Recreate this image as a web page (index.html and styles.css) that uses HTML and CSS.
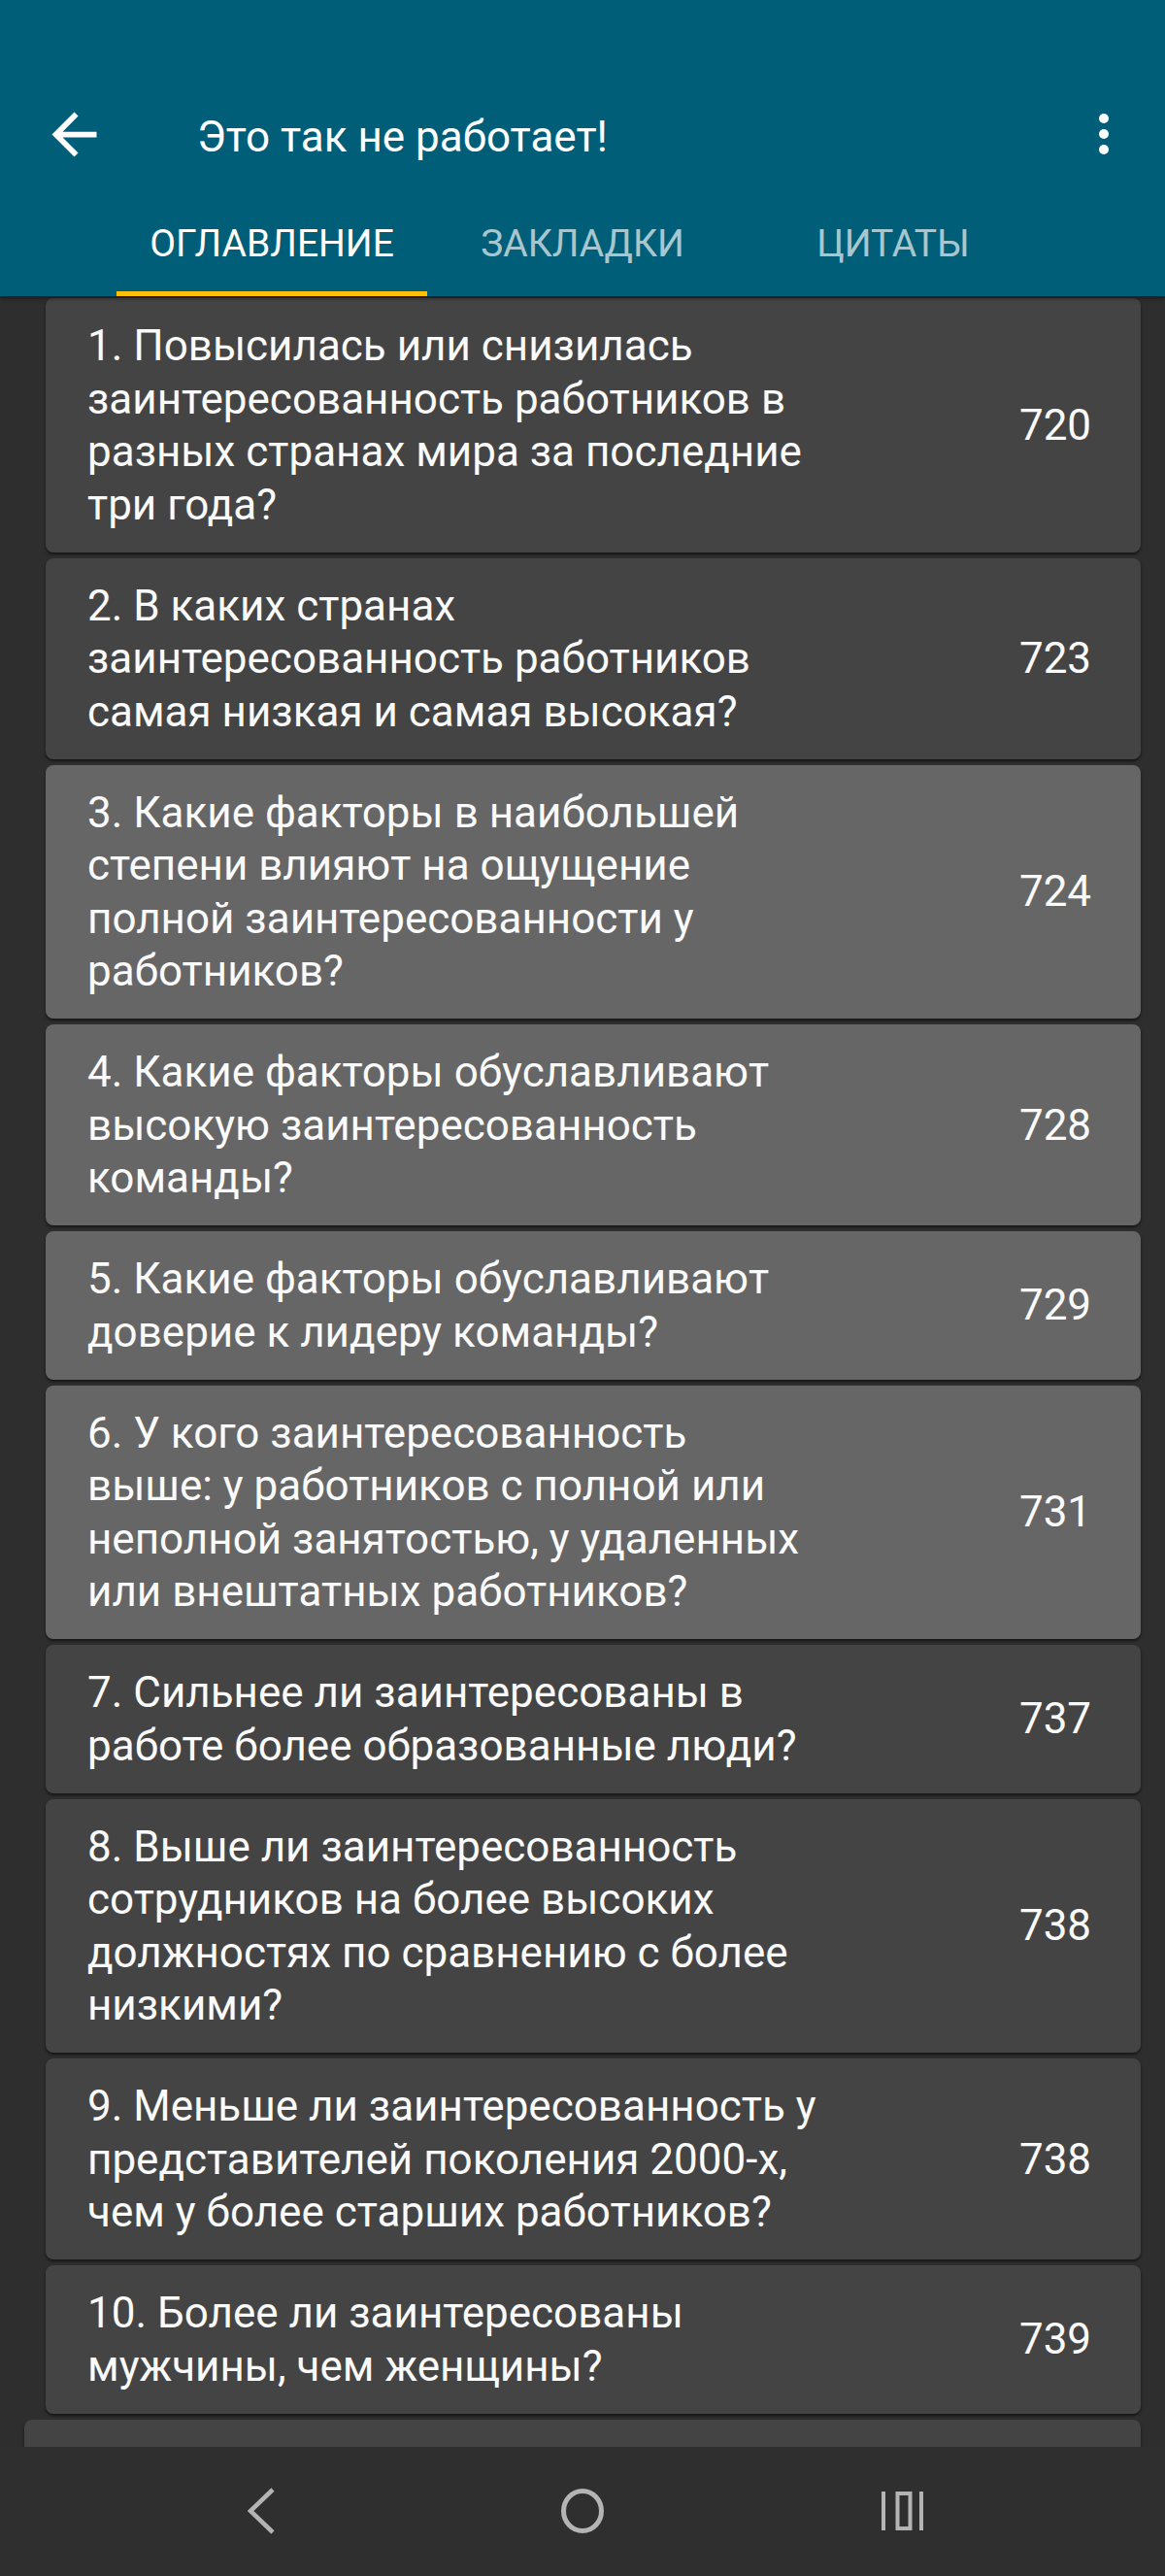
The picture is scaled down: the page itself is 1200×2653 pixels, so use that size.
FILE: index.html
```html
<!DOCTYPE html>
<html lang="ru">

<head>
    <meta charset="UTF-8">
    <meta name="viewport" content="width=device-width, initial-scale=1.0">
    <title>Это так не работает!</title>
    <link rel="stylesheet" href="styles.css">
</head>

<body>
    <div class="screen">
        <header class="app-header">
            <div class="status-bar"></div>
            <div class="toolbar">
                <svg class="back-icon" viewBox="0 0 24 24"><path d="M20 11H7.83l5.59-5.59L12 4l-8 8 8 8 1.41-1.41L7.83 13H20v-2z" fill="#fff"/></svg>
                <div class="toolbar-title">Это так не работает!</div>
                <svg class="menu-icon" viewBox="0 0 24 24"><circle cx="12" cy="5.6" r="2" fill="#fff"/><circle cx="12" cy="12" r="2" fill="#fff"/><circle cx="12" cy="18.4" r="2" fill="#fff"/></svg>
            </div>
            <nav class="tabs">
                <div class="tab active">ОГЛАВЛЕНИЕ</div>
                <div class="tab">ЗАКЛАДКИ</div>
                <div class="tab">ЦИТАТЫ</div>
            </nav>
        </header>

        <main class="toc-list">
            <div class="toc-item">
                <div class="toc-title">1. Повысилась или снизилась заинтересованность работников в разных странах мира за последние три года?</div>
                <div class="toc-page">720</div>
            </div>
            <div class="toc-item">
                <div class="toc-title">2. В каких странах заинтересованность работников самая низкая и самая высокая?</div>
                <div class="toc-page">723</div>
            </div>
            <div class="toc-item read">
                <div class="toc-title">3. Какие факторы в наибольшей степени влияют на ощущение полной заинтересованности у работников?</div>
                <div class="toc-page">724</div>
            </div>
            <div class="toc-item read">
                <div class="toc-title">4. Какие факторы обуславливают высокую заинтересованность команды?</div>
                <div class="toc-page">728</div>
            </div>
            <div class="toc-item read">
                <div class="toc-title">5. Какие факторы обуславливают доверие к лидеру команды?</div>
                <div class="toc-page">729</div>
            </div>
            <div class="toc-item read">
                <div class="toc-title">6. У кого заинтересованность выше: у работников с полной или неполной занятостью, у удаленных или внештатных работников?</div>
                <div class="toc-page">731</div>
            </div>
            <div class="toc-item">
                <div class="toc-title">7. Сильнее ли заинтересованы в работе более образованные люди?</div>
                <div class="toc-page">737</div>
            </div>
            <div class="toc-item">
                <div class="toc-title">8. Выше ли заинтересованность сотрудников на более высоких должностях по сравнению с более низкими?</div>
                <div class="toc-page">738</div>
            </div>
            <div class="toc-item">
                <div class="toc-title">9. Меньше ли заинтересованность у представителей поколения 2000-х, чем у более старших работников?</div>
                <div class="toc-page">738</div>
            </div>
            <div class="toc-item">
                <div class="toc-title">10. Более ли заинтересованы мужчины, чем женщины?</div>
                <div class="toc-page">739</div>
            </div>
            <div class="toc-item wide"></div>
        </main>

        <footer class="nav-bar">
            <svg class="nav-icon" viewBox="0 0 46 50"><polyline points="34,3 11,25 34,47" fill="none" stroke="#b4b4b4" stroke-width="4.5"/></svg>
            <svg class="nav-icon" viewBox="0 0 46 50"><ellipse cx="23" cy="25" rx="19.5" ry="20.5" fill="none" stroke="#b4b4b4" stroke-width="5"/></svg>
            <svg class="nav-icon" viewBox="0 0 46 50"><rect x="1" y="5" width="4" height="40" fill="#b4b4b4"/><rect x="17.5" y="7" width="13" height="36" fill="none" stroke="#b4b4b4" stroke-width="4"/><rect x="40" y="5" width="4" height="40" fill="#b4b4b4"/></svg>
        </footer>
    </div>
</body>

</html>
```

FILE: styles.css
```css
body {
    margin: 0;
    font-family: 'Roboto', 'Noto Sans', sans-serif;
    background: #2e2e2e;
    overflow: hidden;
}

.screen {
    display: flex;
    flex-direction: column;
    height: 2653px;
}

.app-header {
    background: #005e78;
    flex-shrink: 0;
    position: relative;
    z-index: 2;
    box-shadow: 0 2px 4px rgba(0, 0, 0, 0.5);
}

.status-bar {
    height: 86px;
}

.toolbar {
    height: 112px;
    display: flex;
    align-items: center;
    padding: 0 33px 0 42px;
}

.back-icon {
    width: 69px;
    height: 69px;
    margin-top: -7px;
}

.toolbar-title {
    flex: 1;
    margin-left: 92px;
    color: #fff;
    font-size: 44px;
    margin-top: -2px;
}

.menu-icon {
    width: 60px;
    height: 60px;
    margin-top: -8px;
}

.tabs {
    display: flex;
    justify-content: center;
    height: 107px;
}

.tab {
    width: 320px;
    display: flex;
    align-items: center;
    justify-content: center;
    font-size: 39px;
    color: rgba(255, 255, 255, 0.68);
    box-sizing: border-box;
    padding-top: 4px;
    border-bottom: 5px solid transparent;
}

.tab.active {
    color: #fff;
    border-bottom-color: #ffc107;
}

.toc-list {
    flex: 1;
    overflow: hidden;
    padding: 2px 25px 0 47px;
}

.toc-item {
    display: flex;
    align-items: center;
    background: #444444;
    border-radius: 8px;
    box-shadow: 0 2px 3px rgba(0, 0, 0, 0.55);
    padding: 22px 43px 21.5px 43px;
    margin-bottom: 6px;
    color: #fafafa;
    font-size: 44px;
    line-height: 54.5px;
}

.toc-item.read {
    background: #666666;
}

.toc-item.wide {
    margin-left: -22px;
    height: 109px;
    box-sizing: border-box;
}

.toc-title {
    width: 752px;
}

.toc-page {
    margin-left: auto;
    width: 90px;
    text-align: center;
}

.nav-bar {
    flex-shrink: 0;
    height: 133px;
    background: #2f2f2f;
    display: flex;
    justify-content: center;
    align-items: center;
    gap: 284px;
    padding-bottom: 2px;
    box-sizing: border-box;
}

.nav-icon {
    width: 46px;
    height: 50px;
}
```
